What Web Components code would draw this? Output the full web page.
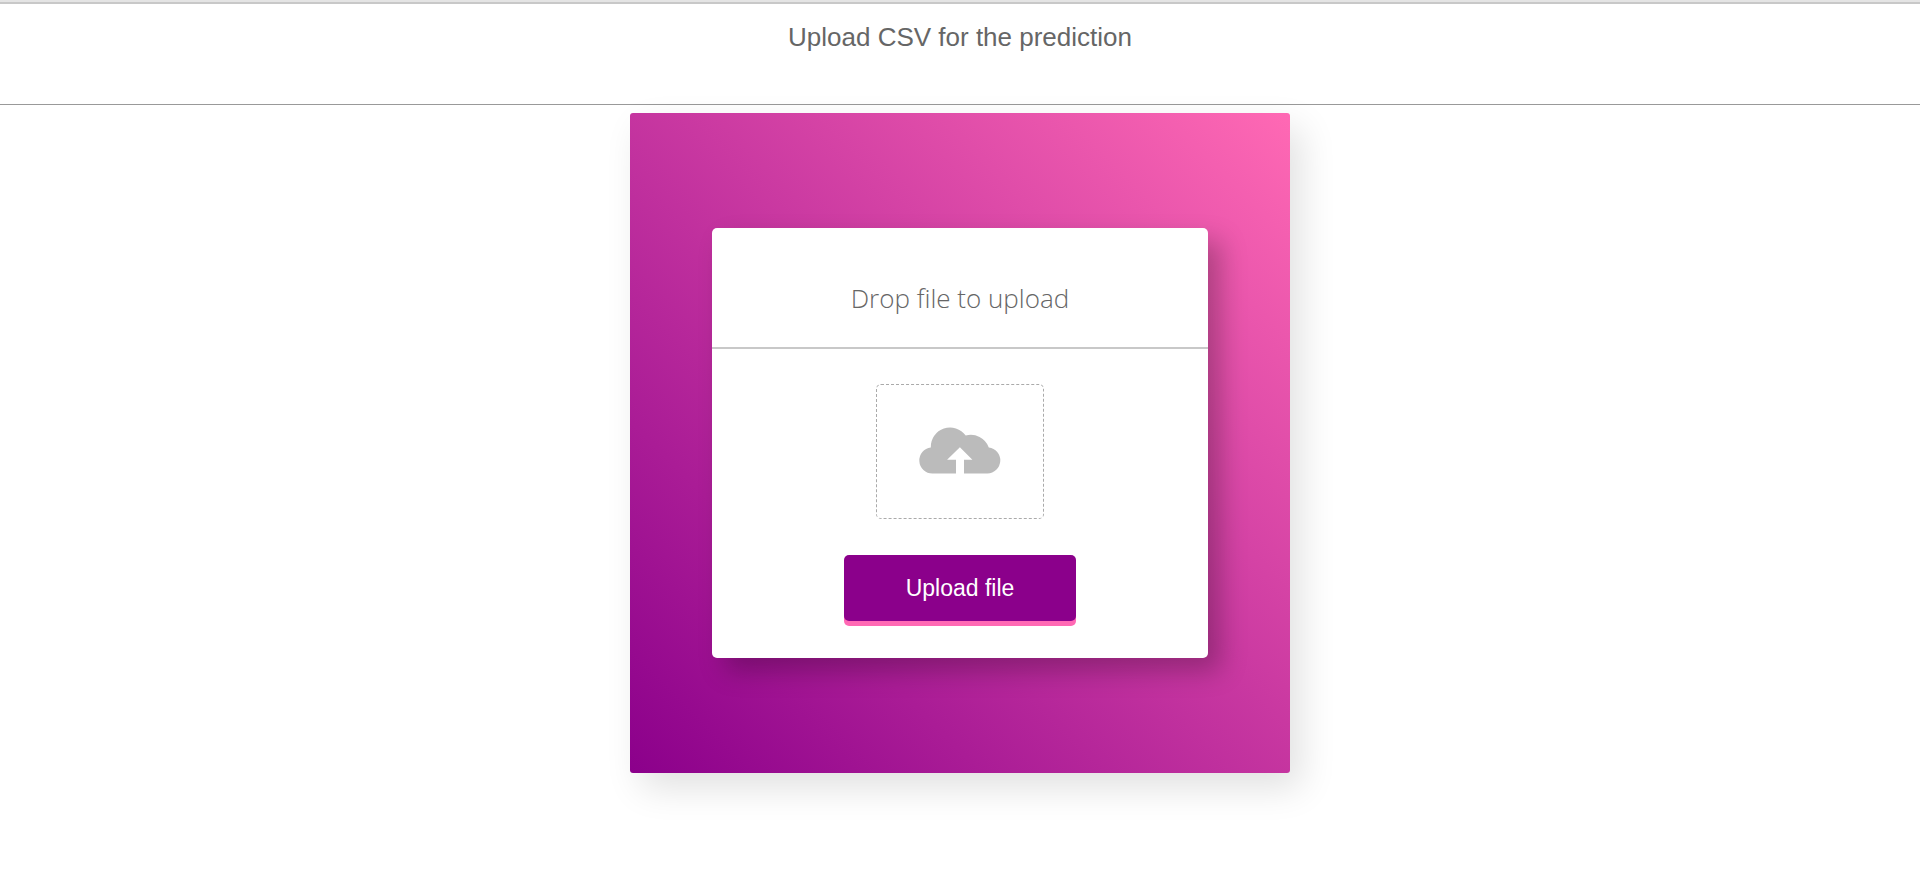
<!DOCTYPE html>
<html lang="en">
<head>
<meta charset="utf-8">
<title>Upload CSV</title>
<style>
body { margin: 0; background: #fff; color: #666; font-family: "Liberation Sans", Arial, sans-serif; }
</style>
</head>
<body>
<upload-page>
  <page-header slot="header">Upload CSV for the prediction</page-header>
  <gradient-panel>
    <upload-card>
      <span slot="title">Drop file to upload</span>
      <drop-zone></drop-zone>
      <upload-button>Upload file</upload-button>
    </upload-card>
  </gradient-panel>
</upload-page>
<script>
const define = (name, html) => {
  const template = document.createElement('template');
  template.innerHTML = html;
  customElements.define(name, class extends HTMLElement {
    constructor() {
      super();
      this.attachShadow({ mode: 'open' }).append(template.content.cloneNode(true));
    }
  });
};

define('upload-page', `
<style>
  :host { display: block; }
  main { display: flex; justify-content: center; padding: 8px 0 48px; }
</style>
<slot name="header"></slot>
<main><slot></slot></main>`);

define('page-header', `
<style>
  :host { display: block; border-top: 2px solid #e4e4e4; }
  header { border-top: 2px solid #c8c8c8; border-bottom: 1px solid #999; padding: 17px 16px 51px; text-align: center; }
  h1 { margin: 0; font-size: 26px; line-height: 32px; font-weight: 400; }
</style>
<header><h1><slot></slot></h1></header>`);

define('gradient-panel', `
<style>
  :host {
    display: flex; align-items: center; justify-content: center; box-sizing: border-box;
    width: 660px; max-width: 100%; aspect-ratio: 1; border-radius: 3px;
    background: linear-gradient(45deg, darkmagenta, hotpink);
    box-shadow: 11px 15px 36px rgba(0, 0, 0, .12);
  }
</style>
<slot></slot>`);

define('upload-card', `
<style>
  :host {
    display: block; box-sizing: border-box; width: 496px; max-width: 100%;
    background: #fff; border-radius: 5px;
    box-shadow: 13px 13px 26px rgba(0, 0, 0, .25);
  }
  h2 {
    margin: 0; padding: 52px 0 31px; border-bottom: 2px solid #c8c8c8; text-align: center;
    font: 300 26px/36px "Open Sans", sans-serif;
  }
  section { display: flex; flex-direction: column; align-items: center; gap: 36px; padding: 35px 0 37px; }
</style>
<h2><slot name="title"></slot></h2>
<section><slot></slot></section>`);

define('drop-zone', `
<style>
  :host { display: block; }
  label {
    position: relative; display: flex; align-items: center; justify-content: center; box-sizing: border-box;
    width: 168px; height: 135px; border: 1px dashed #aaa; border-radius: 5px; cursor: pointer;
  }
  input { position: absolute; inset: 0; width: 100%; height: 100%; opacity: 0; cursor: pointer; }
  svg { display: block; fill: #bbb; overflow: visible; }
</style>
<label>
  <svg width="82" height="47" viewBox="0 0 82 47" aria-hidden="true">
    <path d="M13.4 45.5A13.1 13.1 0 0 1 11.8 19.4A19.3 19.3 0 0 1 46.7 7.5A19.2 19.2 0 0 1 69.8 19.4A13.1 13.1 0 0 1 68.4 45.5H45V31.7H53.4L40.9 19.3L28.1 31.7H37V45.5Z"/>
  </svg>
  <input type="file" accept=".csv" aria-label="Choose a CSV file">
</label>`);

define('upload-button', `
<style>
  :host { display: block; }
  button {
    display: block; width: 232px; height: 66px; padding: 0; border: 0; border-radius: 5px;
    background: darkmagenta; color: #fff; box-shadow: 0 5px 0 hotpink;
    font-family: inherit; font-size: 23px; line-height: 28px; cursor: pointer;
  }
</style>
<button type="button"><slot></slot></button>`);
</script>
</body>
</html>
